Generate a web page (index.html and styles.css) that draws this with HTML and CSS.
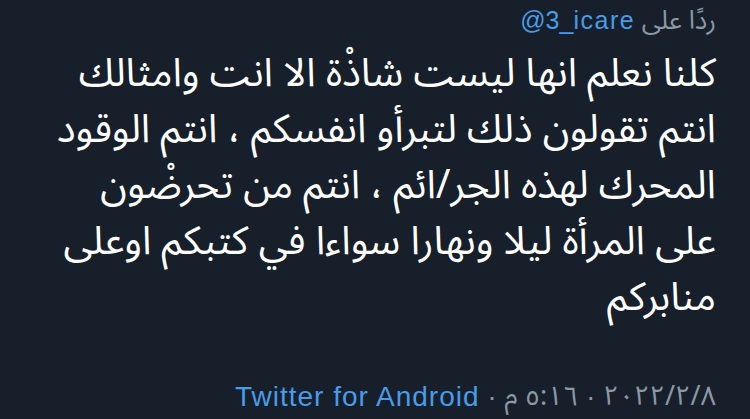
FILE: index.html
```html
<!DOCTYPE html>
<html lang="ar" dir="rtl">
<head>
<meta charset="utf-8">
<link rel="stylesheet" href="styles.css">
</head>
<body>
<main class="tweet">
  <div class="reply">ردًا على <span class="handle" dir="ltr">@3_icare</span></div>
  <p class="text">كلنا نعلم انها ليست شاذْة الا انت وامثالك<br>انتم تقولون ذلك لتبرأو انفسكم ، انتم الوقود<br>المحرك لهذه الجر/ائم ، انتم من تحرضْون<br>على المرأة ليلا ونهارا سواءا في كتبكم اوعلى<br>منابركم</p>
  <div class="meta"><span class="num">٢٠٢٢/٢/٨</span><span class="dot">·</span><span class="num">٥:١٦ م</span><span class="dot">·</span><span class="source" dir="ltr">Twitter for Android</span></div>
</main>
</body>
</html>
```
FILE: styles.css
```css
html, body {
  margin: 0;
  padding: 0;
  background: #171f2a;
}
body {
  width: 750px;
  height: 419px;
  overflow: hidden;
}
.tweet {
  padding: 0 34px 0 20px;
  font-family: "Noto Sans Arabic", "DejaVu Sans", sans-serif;
}
.reply {
  height: 40px;
  line-height: 40px;
  font-size: 26px;
  color: #8b98a5;
}
.handle {
  font-family: "Liberation Sans", Arial, sans-serif;
  font-size: 25px;
  color: #4a9be8;
  letter-spacing: 1.5px;
}
.text {
  margin: 6px 0 0;
  font-size: 39.5px;
  line-height: 56px;
  color: #ffffff;
}
.meta {
  margin-top: 51px;
  height: 40px;
  line-height: 40px;
  font-size: 27px;
  color: #8b98a5;
  display: flex;
  align-items: center;
}
.num {
  letter-spacing: 1px;
}
.dot {
  padding: 0 8px;
  font-family: "Liberation Sans", Arial, sans-serif;
}
.source {
  font-family: "Liberation Sans", Arial, sans-serif;
  font-size: 28px;
  letter-spacing: 1px;
  color: #4a9be8;
}
```
